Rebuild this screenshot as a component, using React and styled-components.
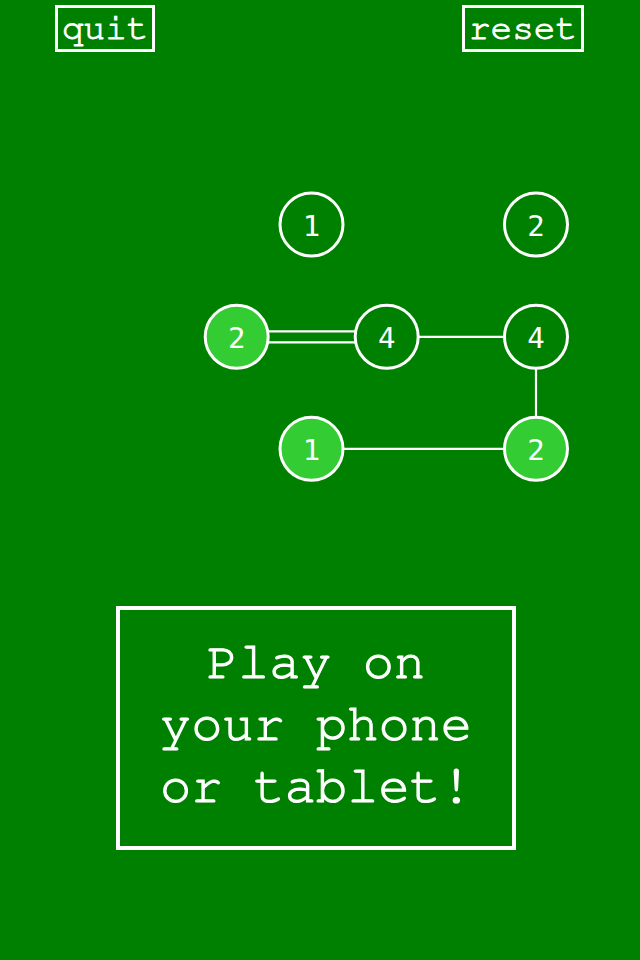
import React from 'react'
import styled, { createGlobalStyle } from 'styled-components'

const GlobalStyle = createGlobalStyle`
  html, body {
    margin: 0;
    padding: 0;
    background: #008000;
  }
  #root {
    min-height: 960px;
  }
`

const mono = 'FreeMono, "Nimbus Mono PS", Courier, "Liberation Mono", monospace'

const nodes = [
  { id: 'a', x: 311.5, y: 224.5, n: 1, done: false },
  { id: 'b', x: 536, y: 224.5, n: 2, done: false },
  { id: 'c', x: 236.7, y: 336.8, n: 2, done: true },
  { id: 'd', x: 386.7, y: 336.8, n: 4, done: false },
  { id: 'e', x: 536, y: 336.8, n: 4, done: false },
  { id: 'f', x: 311.5, y: 448.8, n: 1, done: true },
  { id: 'g', x: 536, y: 448.8, n: 2, done: true }
]

const bridges = [
  { from: 'c', to: 'd', count: 2 },
  { from: 'd', to: 'e', count: 1 },
  { from: 'e', to: 'g', count: 1 },
  { from: 'f', to: 'g', count: 1 }
]

const byId = id => nodes.find(n => n.id === id)

export default () =>
  <Page>
    <GlobalStyle />
    <TopBar>
      <Button>quit</Button>
      <Button>reset</Button>
    </TopBar>
    <Board viewBox="0 52 640 554" width="640" height="554">
      {bridges.map(({ from, to, count }) => {
        const a = byId(from)
        const b = byId(to)
        const vertical = a.x === b.x
        const offsets = count === 2 ? [-5.5, 5.5] : [0]
        return offsets.map(o =>
          <line
            key={from + to + o}
            x1={vertical ? a.x + o : a.x}
            y1={vertical ? a.y : a.y + o}
            x2={vertical ? b.x + o : b.x}
            y2={vertical ? b.y : b.y + o}
            stroke="#fff"
            strokeWidth="2.2"
          />
        )
      })}
      {nodes.map(({ id, x, y, n, done }) =>
        <g key={id}>
          <circle
            cx={x}
            cy={y}
            r="31.5"
            fill={done ? '#33cc33' : '#008000'}
            stroke="#fff"
            strokeWidth="3"
          />
          <NodeLabel x={x} y={y + 1} textAnchor="middle" dominantBaseline="central">
            {n}
          </NodeLabel>
        </g>
      )}
    </Board>
    <PromptRow>
      <Prompt>
        Play on<br />
        your phone<br />
        or tablet!
      </Prompt>
    </PromptRow>
  </Page>

const Page = styled.div`
  width: 640px;
  height: 960px;
  background: #008000;
  color: #fff;
  font-family: ${mono};
  display: flex;
  flex-direction: column;
`

const TopBar = styled.div`
  display: flex;
  justify-content: space-between;
  padding: 5px 56px 0 55px;
`

const Button = styled.button`
  background: transparent;
  border: 3px solid #fff;
  color: #fff;
  font-family: ${mono};
  font-size: 36px;
  line-height: 41px;
  -webkit-text-stroke: 1px #fff;
  padding: 0 4px;
  margin: 0;
  cursor: pointer;
`

const Board = styled.svg`
  display: block;
`

const NodeLabel = styled.text`
  fill: #fff;
  font-family: "DejaVu Sans Mono", monospace;
  font-size: 29px;
`

const PromptRow = styled.div`
  display: flex;
  padding-left: 116px;
`

const Prompt = styled.div`
  border: 4px solid #fff;
  padding: 21px 40px 29px;
  width: 312px;
  text-align: center;
  font-size: 52px;
  line-height: 62px;
  -webkit-text-stroke: 1.2px #fff;
`
